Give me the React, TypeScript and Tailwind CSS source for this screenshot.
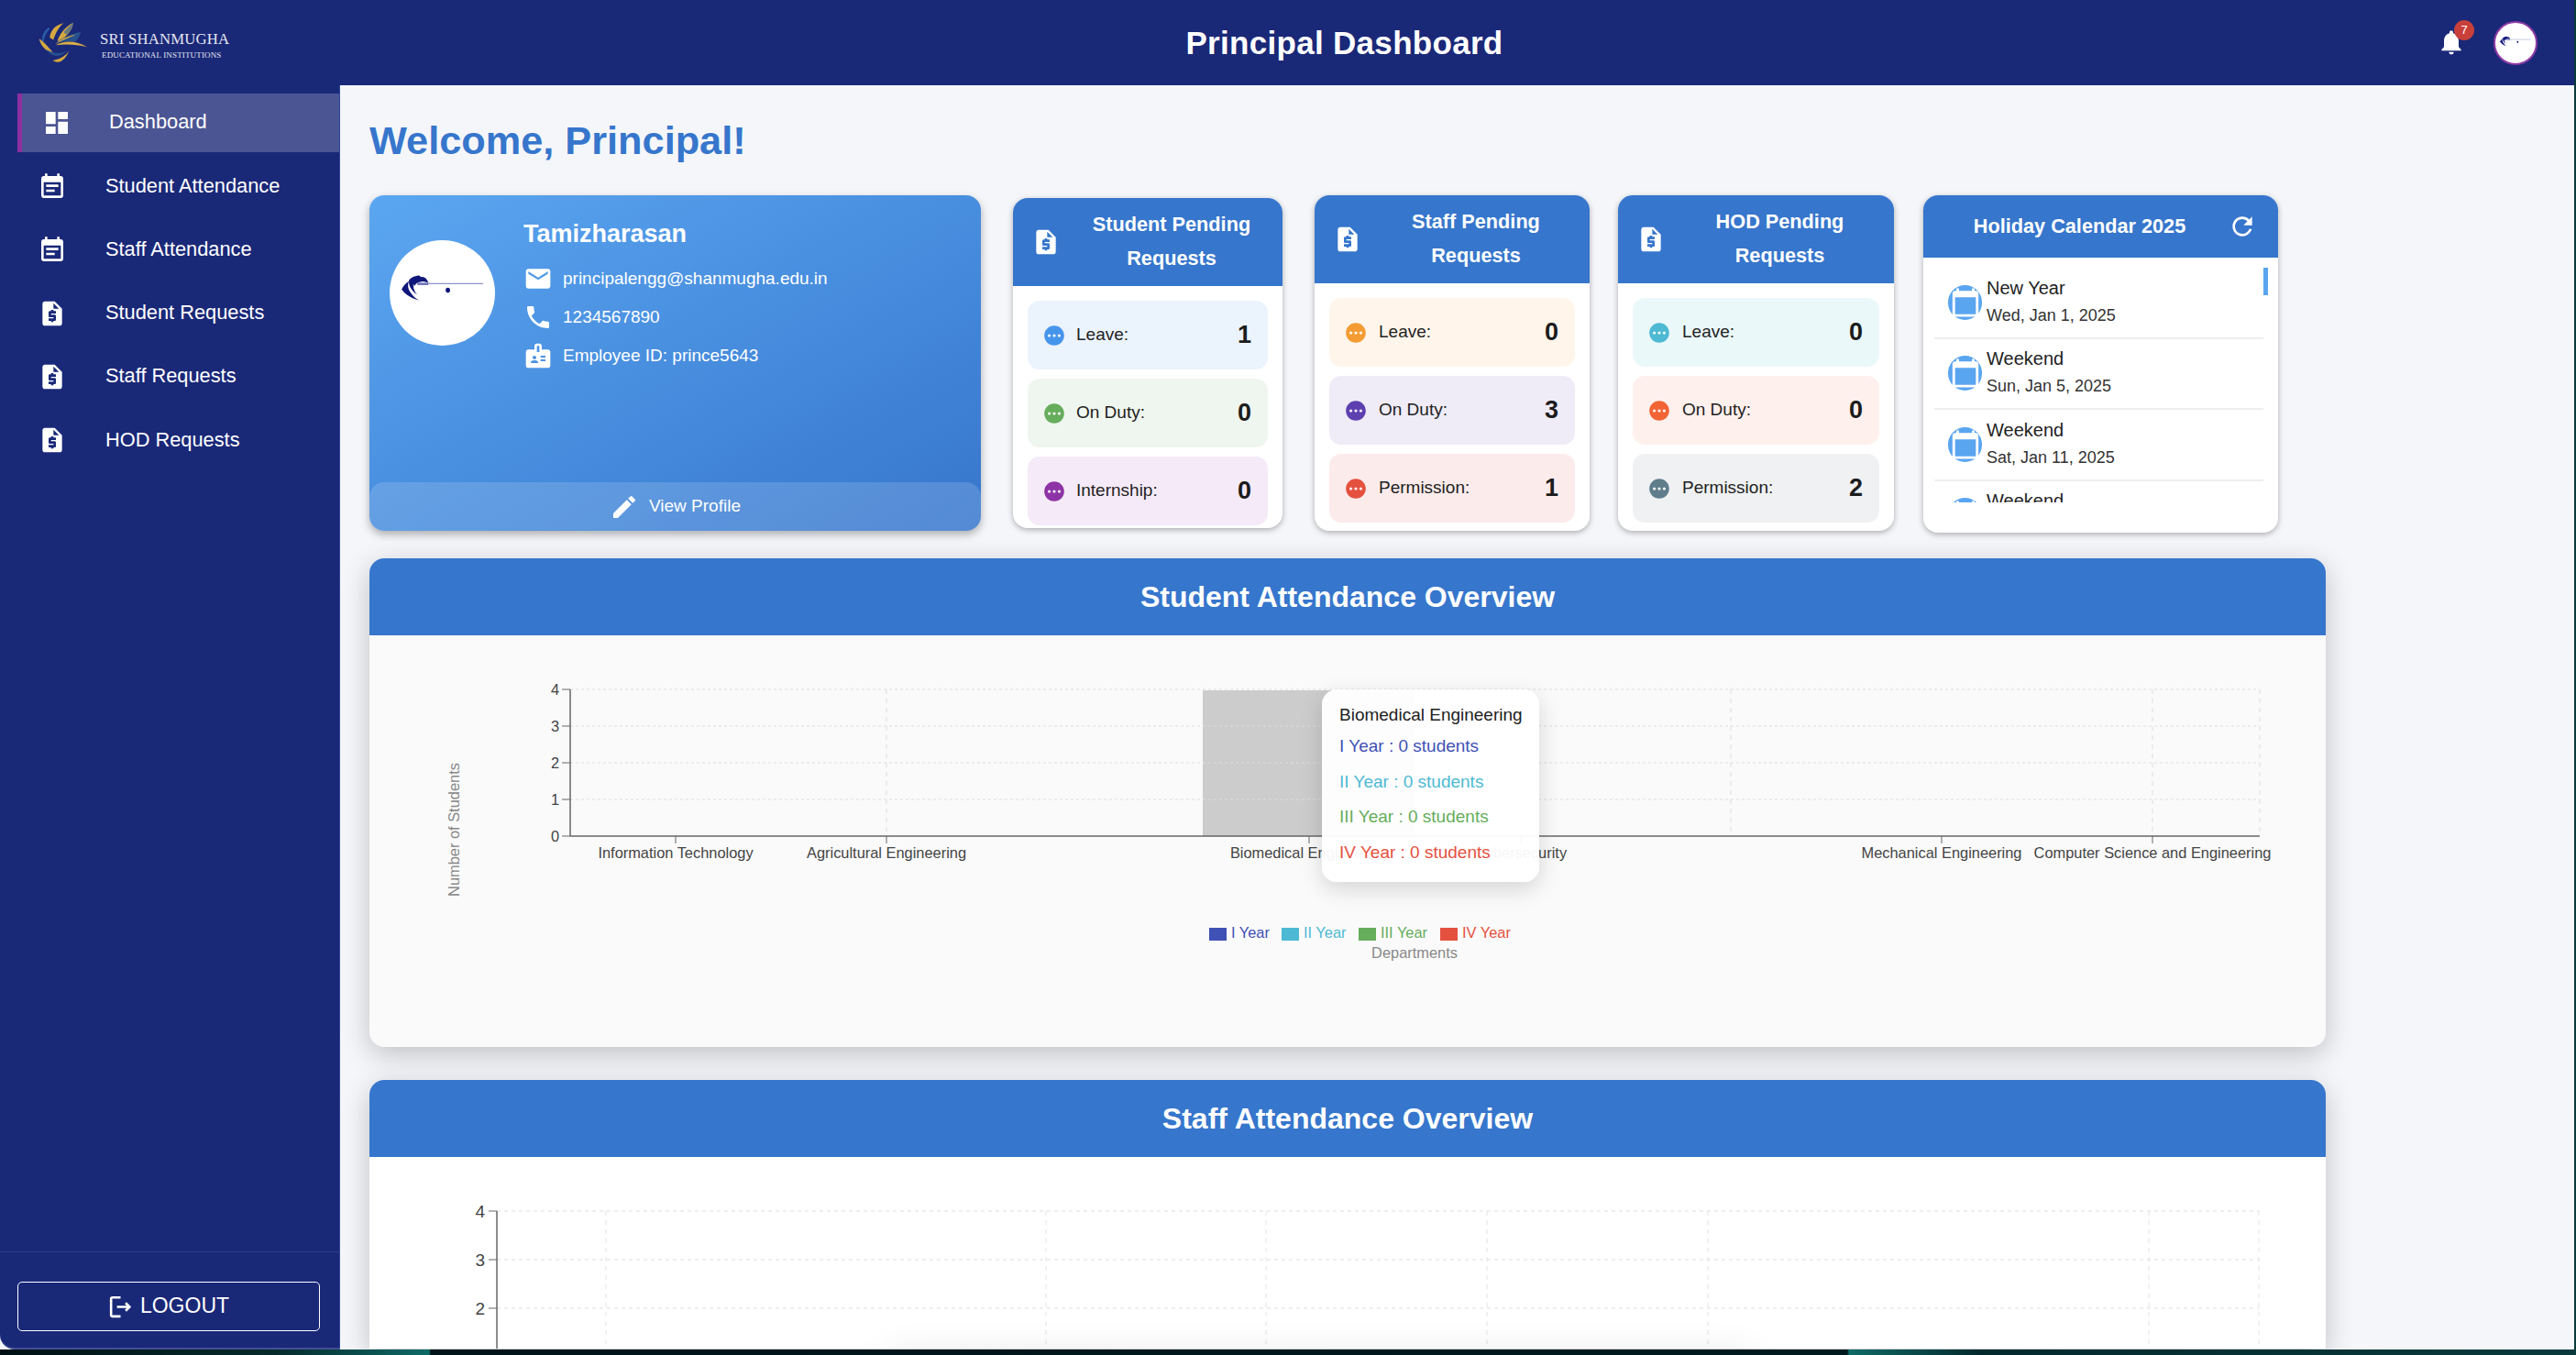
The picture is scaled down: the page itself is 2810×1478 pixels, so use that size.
import React from "react";

const P = {
  dash: "M3 13h8V3H3v10zm0 8h8v-6H3v6zm10 0h8V11h-8v10zm0-18v6h8V3h-8z",
  note: "M17 10H7v2h10v-2zm2-7h-1V1h-2v2H8V1H6v2H5c-1.11 0-1.99.9-1.99 2L3 19c0 1.1.89 2 2 2h14c1.1 0 2-.9 2-2V5c0-1.1-.9-2-2-2zm0 16H5V8h14v11zm-5-5H7v2h7v-2z",
  req: "M14 2H6c-1.1 0-1.99.9-1.99 2L4 20c0 1.1.89 2 2 2h12c1.1 0 2-.9 2-2V8l-6-6zm1 10h-4v1h3c.55 0 1 .45 1 1v3c0 .55-.45 1-1 1h-1v1h-2v-1H9v-2h4v-1h-3c-.55 0-1-.45-1-1v-3c0-.55.45-1 1-1h1V9h2v1h2v2zm-2-4V3.5L17.5 8H13z",
  mail: "M20 4H4c-1.1 0-1.99.9-1.99 2L2 18c0 1.1.9 2 2 2h16c1.1 0 2-.9 2-2V6c0-1.1-.9-2-2-2zm0 4l-8 5-8-5V6l8 5 8-5v2z",
  phone: "M6.62 10.79c1.44 2.83 3.76 5.14 6.59 6.59l2.2-2.2c.27-.27.67-.36 1.02-.24 1.12.37 2.33.57 3.57.57.55 0 1 .45 1 1V20c0 .55-.45 1-1 1-9.39 0-17-7.61-17-17 0-.55.45-1 1-1h3.5c.55 0 1 .45 1 1 0 1.25.2 2.45.57 3.57.11.35.03.74-.25 1.02l-2.2 2.2z",
  badge: "M20 7h-5V4c0-1.1-.9-2-2-2h-2c-1.1 0-2 .9-2 2v3H4c-1.1 0-2 .9-2 2v11c0 1.1.9 2 2 2h16c1.1 0 2-.9 2-2V9c0-1.1-.9-2-2-2zM9 12c.83 0 1.5.67 1.5 1.5S9.83 15 9 15s-1.5-.67-1.5-1.5S8.17 12 9 12zm3 6H6v-.75c0-1 2-1.5 3-1.5s3 .5 3 1.5V18zm1-9h-2V4h2v5zm5 7.5h-4V15h4v1.5zm0-3h-4V12h4v1.5z",
  edit: "M3 17.25V21h3.75L17.81 9.94l-3.75-3.75L3 17.25zM20.71 7.04c.39-.39.39-1.02 0-1.41l-2.34-2.34a.9959.9959 0 0 0-1.41 0l-1.83 1.83 3.75 3.75 1.83-1.83z",
  pending: "M12 2C6.48 2 2 6.48 2 12s4.48 10 10 10 10-4.48 10-10S17.52 2 12 2zM7 13.5c-.83 0-1.5-.67-1.5-1.5s.67-1.5 1.5-1.5 1.5.67 1.5 1.5-.67 1.5-1.5 1.5zm5 0c-.83 0-1.5-.67-1.5-1.5s.67-1.5 1.5-1.5 1.5.67 1.5 1.5-.67 1.5-1.5 1.5zm5 0c-.83 0-1.5-.67-1.5-1.5s.67-1.5 1.5-1.5 1.5.67 1.5 1.5-.67 1.5-1.5 1.5z",
  refresh: "M17.65 6.35C16.2 4.9 14.21 4 12 4c-4.42 0-7.99 3.58-7.99 8s3.57 8 7.99 8c3.73 0 6.84-2.55 7.73-6h-2.08c-.82 2.33-3.04 4-5.65 4-3.31 0-6-2.69-6-6s2.69-6 6-6c1.66 0 3.14.69 4.22 1.78L13 11h7V4l-2.35 2.35z",
  bell: "M12 22c1.1 0 2-.9 2-2h-4c0 1.1.89 2 2 2zm6-6v-5c0-3.07-1.64-5.64-4.5-6.32V4c0-.83-.67-1.5-1.5-1.5s-1.5.67-1.5 1.5v.68C7.63 5.36 6 7.92 6 11v5l-2 2v1h16v-1l-2-2z",
  logout: "M17 8l-1.41 1.41L17.17 11H9v2h8.17l-1.58 1.58L17 16l4-4-4-4zM5 5h7V3H5c-1.1 0-2 .9-2 2v14c0 1.1.9 2 2 2h7v-2H5V5z",
  cal: "M20 3h-1V1h-2v2H7V1H5v2H4c-1.1 0-2 .9-2 2v16c0 1.1.9 2 2 2h16c1.1 0 2-.9 2-2V5c0-1.1-.9-2-2-2zm0 18H4V8h16v13z",
};

function Ic({ d, className }: { d: string; className: string }) {
  return (
    <svg viewBox="0 0 24 24" className={className} fill="currentColor">
      <path d={d} />
    </svg>
  );
}

function LogoMark({ className }: { className: string }) {
  return (
    <svg viewBox="30 26 168 144" className={className}>
      <path d="M68 44 C46 58 42 88 50 102 C52 82 58 62 72 50Z" fill="#2a5da8" />
      <path d="M72 78 C74 55 90 36 118 30 C104 42 92 60 84 86Z" fill="#d5a83f" />
      <path d="M98 88 C104 66 124 42 150 28 C149 52 130 72 102 92Z" fill="#d5a83f" />
      <path d="M118 60 C130 48 140 36 150 28 C149 44 140 58 128 68Z" fill="#2a5da8" opacity="0.65" />
      <path d="M92 98 C115 76 150 64 176 60 C172 74 164 86 158 92 C136 88 112 90 92 98Z" fill="#27508f" />
      <path d="M90 100 C112 80 136 72 160 68 C136 78 112 88 90 100Z" fill="#d5a83f" />
      <path d="M92 103 C122 86 162 88 197 110 C162 100 126 100 92 103Z" fill="#d9ae45" />
      <path d="M36 82 C44 110 62 126 86 132 C72 116 56 94 36 82Z" fill="#d5a83f" />
      <path d="M60 118 C76 142 108 150 132 118 C120 132 92 136 60 118Z" fill="#27508f" />
      <path d="M82 155 C106 170 126 150 136 122 C126 140 106 150 82 155Z" fill="#d5a83f" />
    </svg>
  );
}

function Sketch({ className }: { className: string }) {
  return (
    <svg viewBox="0 0 114 114" className={className}>
      <path d="M13 53 C15 49 18 46 21 44 C19 49 20 53 23 57 C25 60 28 63 32 65 C24 63 17 59 13 53Z" fill="#10177a" />
      <path d="M21 43 C23 41 26 39 29 39 C26 43 25 47 26 52 C27 55 28 57 30 59 C24 55 20 49 21 43Z" fill="#10177a" />
      <path d="M27 40 C29 38 32 37 34 40 C37 39 40 41 42 46 C38 44 34 44 30 46 C28 47 27 49 27 50 C25 47 25 43 27 40Z" fill="#10177a" />
      <rect x="30" y="46" width="12" height="2.5" fill="#6a6fb8" />
      <line x1="42" y1="47" x2="101" y2="47" stroke="#8f92c8" strokeWidth="1.2" />
      <ellipse cx="63" cy="54" rx="2.4" ry="2.8" fill="#10177a" />
    </svg>
  );
}

const nav = [
  ["Student Attendance", P.note],
  ["Staff Attendance", P.note],
  ["Student Requests", P.req],
  ["Staff Requests", P.req],
  ["HOD Requests", P.req],
];

function Sidebar() {
  return (
    <aside className="flex w-[371px] shrink-0 flex-col rounded-bl-[16px] border-r border-b-2 border-[#2c4a96] border-b-[#444f96] bg-[#1a2878] pt-[9px] text-white">
      <div className="ml-[19px] flex h-[64px] items-center border-l-[5px] border-[#8e2fa0] bg-[#4b5593] pl-[22px]">
        <Ic d={P.dash} className="h-[32px] w-[32px]" />
        <span className="ml-[41px] -mt-[2px] text-[21.8px]">Dashboard</span>
      </div>
      <div className="flex flex-col pt-[3px]">
        {nav.map(([t, d]) => (
          <div key={t} className="flex h-[69.2px] items-center pl-[41px]">
            <Ic d={d} className="h-[32px] w-[32px]" />
            <span className="ml-[42px] -mt-[1px] text-[21.8px]">{t}</span>
          </div>
        ))}
      </div>
      <div className="mt-auto flex h-[105px] flex-col border-t border-[#303d88] pl-[19px] pt-[32px]">
        <div className="flex h-[54px] w-[330px] items-center justify-center gap-[6px] rounded-[5px] border-[1.5px] border-white text-[23px]">
          <Ic d={P.logout} className="h-[31px] w-[31px]" />
          <span className="-mt-[2px] mr-[2px]">LOGOUT</span>
        </div>
      </div>
    </aside>
  );
}

function Header() {
  return (
    <header className="relative flex h-[93px] shrink-0 items-center justify-center bg-[#1a2878] text-white">
      <div className="absolute left-[40px] top-[24px] flex items-start">
        <LogoMark className="h-[47px] w-[56px]" />
        <div className="ml-[13px] mt-[11px] flex flex-col font-['Liberation_Serif',serif] leading-none text-[#e4e6f0]">
          <span className="text-[16.7px] tracking-[0.2px]">SRI SHANMUGHA</span>
          <span className="ml-[2px] mt-[4px] text-[9px] tracking-[0.15px]">EDUCATIONAL INSTITUTIONS</span>
        </div>
      </div>
      <h1 className="ml-[125px] mt-[2px] text-[35px] font-bold tracking-[0.3px]">Principal Dashboard</h1>
      <div className="absolute left-[2658px] top-[30px]">
        <Ic d={P.bell} className="h-[32px] w-[32px]" />
        <span className="absolute left-[19px] -top-[8px] flex h-[22px] w-[22px] items-center justify-center rounded-full bg-[#c9403a] text-[13px] text-white">7</span>
      </div>
      <div className="absolute left-[2720px] top-[23px] flex h-[48px] w-[48px] items-center justify-center overflow-hidden rounded-full border-[2px] border-[#8e3ba5] bg-white">
        <Sketch className="h-[44px] w-[44px]" />
      </div>
    </header>
  );
}

function Profile() {
  const rows = [
    [P.mail, "principalengg@shanmugha.edu.in"],
    [P.phone, "1234567890"],
    [P.badge, "Employee ID: prince5643"],
  ];
  return (
    <div className="relative flex h-[366px] w-[667px] shrink-0 flex-col overflow-hidden rounded-[16px] bg-gradient-to-br from-[#5ba6f1] to-[#3676cc] text-white shadow-[0_4px_10px_rgba(0,0,0,0.3)]">
      <div className="flex flex-1 items-start pl-[22px]">
        <div className="mt-[49px] flex h-[115px] w-[115px] items-center justify-center rounded-full bg-white">
          <Sketch className="h-[115px] w-[115px]" />
        </div>
        <div className="ml-[31px] flex flex-col pt-[25px]">
          <div className="text-[27px] font-bold leading-[34px]">Tamizharasan</div>
          <div className="mt-[16px] flex flex-col gap-[10px]">
            {rows.map(([d, t], i) => (
              <div key={i} className="flex h-[32px] items-center">
                <Ic d={d} className="h-[32px] w-[32px]" />
                <span className="ml-[11px] text-[19px]">{t}</span>
              </div>
            ))}
          </div>
        </div>
      </div>
      <div className="flex h-[53px] items-center justify-center rounded-t-[16px] bg-white/15">
        <Ic d={P.edit} className="h-[32px] w-[32px]" />
        <span className="ml-[11px] text-[19px]">View Profile</span>
      </div>
    </div>
  );
}

type Row = { label: string; value: number; dot: string; bg: string };

function ReqCard({ title, rows, w, h, gap }: { title: string[]; rows: Row[]; w: string; h: string; gap: string }) {
  return (
    <div className={`flex shrink-0 flex-col overflow-hidden rounded-[16px] bg-white shadow-[0_2px_6px_rgba(0,0,0,0.3)] ${w} ${h}`}>
      <div className="flex h-[96px] items-center bg-[#3676cc] pl-[20px] text-white">
        <Ic d={P.req} className="h-[32px] w-[32px] shrink-0" />
        <div className="-mt-[3px] flex-1 text-center text-[21.7px] font-bold leading-[37px]">
          <div>{title[0]}</div>
          <div>{title[1]}</div>
        </div>
      </div>
      <div className="flex flex-col gap-[10px] px-[16px] pt-[16px]">
        {rows.map((r) => (
          <div key={r.label} className={`flex h-[75px] items-center rounded-[13px] pl-[16px] pr-[18px] ${r.bg}`}>
            <Ic d={P.pending} className={`h-[26px] w-[26px] ${r.dot}`} />
            <span className={`text-[19px] text-[#222] ${gap}`}>{r.label}</span>
            <span className="ml-auto text-[27px] font-bold text-[#1c1c1c]">{r.value}</span>
          </div>
        ))}
      </div>
    </div>
  );
}

function Calendar() {
  const items = [
    ["New Year", "Wed, Jan 1, 2025"],
    ["Weekend", "Sun, Jan 5, 2025"],
    ["Weekend", "Sat, Jan 11, 2025"],
    ["Weekend", "Sun, Jan 12, 2025"],
  ];
  return (
    <div className="flex h-[368px] w-[387px] shrink-0 flex-col overflow-hidden rounded-[16px] bg-white shadow-[0_2px_6px_rgba(0,0,0,0.3)]">
      <div className="relative flex h-[68px] shrink-0 items-center justify-center bg-[#3676cc] text-white">
        <span className="mr-[46px] text-[21.7px] font-bold">Holiday Calendar 2025</span>
        <Ic d={P.refresh} className="absolute left-[332px] top-[18px] h-[32px] w-[32px]" />
      </div>
      <div className="relative ml-[12px] mr-[11px] mt-[11px] h-[256px] overflow-hidden pr-[5px]">
        <div className="absolute right-0 top-0 h-[30px] w-[5px] bg-[#5aa5f0]" />
        {items.map(([a, b], i) => (
          <div key={i} className="flex h-[77.5px] items-center border-b-2 border-[#eeeeee] pl-[15px]">
            <span className="flex h-[38px] w-[37px] items-center justify-center rounded-full bg-[#5aa5f0] text-white">
              <Ic d={P.cal} className="h-[34px] w-[34px]" />
            </span>
            <div className="-mt-[2px] ml-[5px] flex flex-col">
              <span className="text-[20px] leading-[30px] text-[#222]">{a}</span>
              <span className="text-[18px] leading-[30px] text-[#333]">{b}</span>
            </div>
          </div>
        ))}
      </div>
    </div>
  );
}

const labels: [number, string][] = [
  [737, "Information Technology"],
  [967, "Agricultural Engineering"],
  [1428, "Biomedical Engineering"],
  [1659, "Cybersecurity"],
  [2118, "Mechanical Engineering"],
  [2348, "Computer Science and Engineering"],
];

const legend: [number, number, string, string][] = [
  [1319, 1343, "I Year", "#3f51b5"],
  [1398, 1422, "II Year", "#4db9d3"],
  [1482, 1506, "III Year", "#66ad5c"],
  [1571, 1595, "IV Year", "#e5513f"],
];

function StudentChart() {
  const ox = 403;
  const oy = 693;
  const ys = [752, 792, 832, 872, 912];
  const vs = [967, 1888, 2348, 2465];
  return (
    <svg width="2134" height="449" viewBox={`${ox} ${oy} 2134 449`} className="block" fontFamily="'Liberation Sans', Arial, sans-serif">
      <rect x="1312" y="753" width="231" height="159" fill="#cccccc" />
      {ys.slice(0, 4).map((y) => (
        <line key={y} x1="622" x2="2465" y1={y} y2={y} stroke="#dddddd" strokeDasharray="3 3" />
      ))}
      {vs.map((x) => (
        <line key={x} x1={x} x2={x} y1="752" y2="912" stroke="#dddddd" strokeDasharray="5 5" />
      ))}
      <line x1="622" x2="622" y1="752" y2="912" stroke="#666" strokeWidth="1.5" />
      <line x1="622" x2="2465" y1="912" y2="912" stroke="#666" strokeWidth="1.5" />
      {ys.map((y, i) => (
        <g key={y}>
          <line x1="613" x2="622" y1={y} y2={y} stroke="#666" />
          <text x="610" y={y + 6} textAnchor="end" fontSize="16.4" fill="#444">{4 - i}</text>
        </g>
      ))}
      {labels.map(([x, t]) => (
        <g key={t}>
          <line x1={x} x2={x} y1="912" y2="920" stroke="#666" />
          <text x={x} y="936" textAnchor="middle" fontSize="16.4" fill="#444">{t}</text>
        </g>
      ))}
      <text transform="translate(501 905) rotate(-90)" textAnchor="middle" fontSize="16.4" fill="#888">Number of Students</text>
      {legend.map(([sx, tx, t, c]) => (
        <g key={t}>
          <rect x={sx} y="1012" width="19" height="14" fill={c} />
          <text x={tx} y="1023" fontSize="16.4" fill={c}>{t}</text>
        </g>
      ))}
      <text x="1543" y="1045" textAnchor="middle" fontSize="16.4" fill="#888">Departments</text>
    </svg>
  );
}

function StaffChart() {
  const ox = 403;
  const oy = 1263;
  const ys = [1322, 1375, 1428];
  const vs = [661, 1141, 1381, 1622, 1863, 2344, 2464];
  return (
    <svg width="2134" height="209" viewBox={`${ox} ${oy} 2134 209`} className="block" fontFamily="'Liberation Sans', Arial, sans-serif">
      {ys.map((y) => (
        <line key={y} x1="542" x2="2464" y1={y} y2={y} stroke="#dddddd" strokeDasharray="4 4" />
      ))}
      {vs.map((x) => (
        <line key={x} x1={x} x2={x} y1="1322" y2="1472" stroke="#e2e2e2" strokeDasharray="5 5" />
      ))}
      <line x1="542" x2="542" y1="1322" y2="1472" stroke="#666" strokeWidth="1.5" />
      {ys.map((y, i) => (
        <g key={y}>
          <line x1="533" x2="542" y1={y} y2={y} stroke="#666" />
          <text x="529" y={y + 7} textAnchor="end" fontSize="19" fill="#444">{4 - i}</text>
        </g>
      ))}
    </svg>
  );
}

function ChartCard({ title, children, body, tall }: { title: string; children: React.ReactNode; body: string; tall?: boolean }) {
  return (
    <section className={`relative w-[2134px] shrink-0 overflow-hidden rounded-t-[16px] ${tall ? "rounded-b-[16px]" : ""} ${body} shadow-[0_8px_30px_rgba(0,0,0,0.22)]`}>
      <div className="flex h-[84px] items-center justify-center bg-[#3676cc] text-[32px] font-bold text-white">{title}</div>
      {children}
    </section>
  );
}

function Tooltip() {
  const rows: [string, string][] = [
    ["I Year : 0 students", "text-[#3f51b5]"],
    ["II Year : 0 students", "text-[#4db9d3]"],
    ["III Year : 0 students", "text-[#66ad5c]"],
    ["IV Year : 0 students", "text-[#e5513f]"],
  ];
  return (
    <div className="absolute left-[1039px] top-[143px] flex h-[210px] w-[237px] flex-col rounded-[16px] bg-white/95 pl-[19px] pt-[16px] shadow-[0_8px_24px_rgba(0,0,0,0.15)]">
      <div className="text-[19px] leading-[24px] text-[#222]">Biomedical Engineering</div>
      <div className="mt-[9px] flex flex-col gap-[12.6px]">
        {rows.map(([t, c]) => (
          <div key={t} className={`text-[19px] leading-[26px] ${c}`}>{t}</div>
        ))}
      </div>
    </div>
  );
}

export default function App() {
  return (
    <div className="h-[1478px] w-[2810px] overflow-hidden bg-[linear-gradient(90deg,#001014_0,#062a2c_300px,#0e6a66_468px,#00141a_470px,#001a1f_2015px,#0f6b66_2017px,#03292d_2160px,#0a3a3c_2810px)] font-['Liberation_Sans',Arial,sans-serif]">
      <div className="flex h-[1472px] w-[2808px] flex-col overflow-hidden bg-[#f5f6fa]">
        <Header />
        <div className="flex min-h-0 flex-1">
          <Sidebar />
          <main className="min-w-0 flex-1 overflow-hidden pl-[32px]">
            <h2 className="mt-[36px] h-[48px] text-[43.3px] font-bold leading-[48px] text-[#3676cc]">Welcome, Principal!</h2>
            <div className="mt-[36px] flex items-start">
              <Profile />
              <div className="ml-[35px] mt-[3px]">
                <ReqCard
                  w="w-[294px]"
                  h="h-[360px]"
                  gap="ml-[11px]"
                  title={["Student Pending", "Requests"]}
                  rows={[
                    { label: "Leave:", value: 1, dot: "text-[#4695ec]", bg: "bg-[#ebf3fd]" },
                    { label: "On Duty:", value: 0, dot: "text-[#66ad5c]", bg: "bg-[#eff6ef]" },
                    { label: "Internship:", value: 0, dot: "text-[#8e33a6]", bg: "bg-[#f5eaf7]" },
                  ]}
                />
              </div>
              <div className="ml-[35px]">
                <ReqCard
                  w="w-[300px]"
                  h="h-[366px]"
                  gap="ml-[12px]"
                  title={["Staff Pending", "Requests"]}
                  rows={[
                    { label: "Leave:", value: 0, dot: "text-[#f39c33]", bg: "bg-[#fff5ea]" },
                    { label: "On Duty:", value: 3, dot: "text-[#5e3fb0]", bg: "bg-[#efebf7]" },
                    { label: "Permission:", value: 1, dot: "text-[#e5513f]", bg: "bg-[#fcebeb]" },
                  ]}
                />
              </div>
              <div className="ml-[31px]">
                <ReqCard
                  w="w-[301px]"
                  h="h-[366px]"
                  gap="ml-[12px]"
                  title={["HOD Pending", "Requests"]}
                  rows={[
                    { label: "Leave:", value: 0, dot: "text-[#4db9d3]", bg: "bg-[#ebf8fa]" },
                    { label: "On Duty:", value: 0, dot: "text-[#f26436]", bg: "bg-[#fef0ed]" },
                    { label: "Permission:", value: 2, dot: "text-[#607d8b]", bg: "bg-[#eff1f3]" },
                  ]}
                />
              </div>
              <div className="ml-[32px]">
                <Calendar />
              </div>
            </div>
            <div className="mt-[28px] flex flex-col gap-[36px]">
              <ChartCard title="Student Attendance Overview" body="bg-[#fafafa]" tall>
                <StudentChart />
                <Tooltip />
              </ChartCard>
              <ChartCard title="Staff Attendance Overview" body="bg-white">
                <StaffChart />
                <div className="absolute left-[560px] top-[300px] h-[100px] w-[950px] rounded-[16px] bg-white shadow-[0_0_40px_rgba(0,0,0,0.1)]" />
              </ChartCard>
            </div>
          </main>
        </div>
      </div>
    </div>
  );
}
